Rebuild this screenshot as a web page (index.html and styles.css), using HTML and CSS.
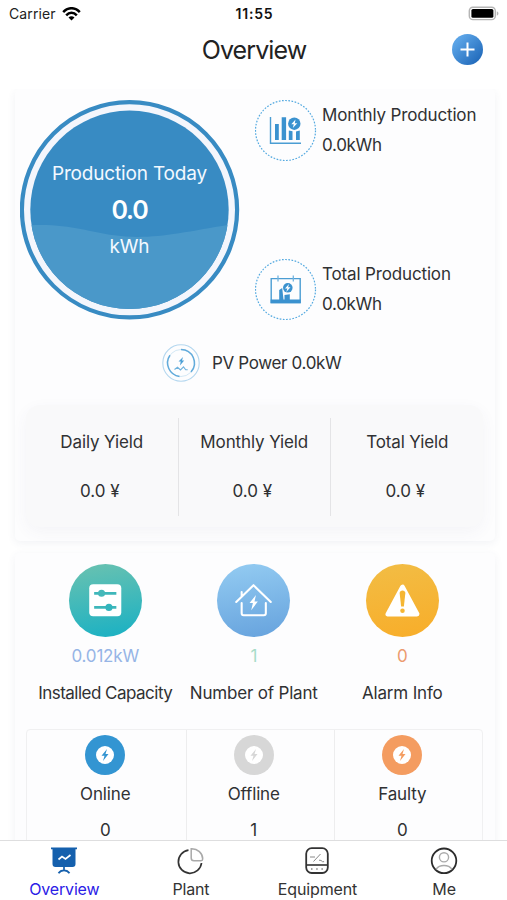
FILE: index.html
```html
<!DOCTYPE html>
<html lang="en">
<head>
<meta charset="utf-8">
<meta name="viewport" content="width=device-width, initial-scale=1">
<title>Overview</title>
<link rel="stylesheet" href="styles.css">
</head>
<body>
<div class="app">
  <header class="status">
    <div class="carrier"><span>Carrier</span>
      <svg width="19" height="14" viewBox="0 0 19 14" fill="none" stroke="#000" stroke-width="2.5"><path d="M1.2 5.1C6-.1 13-.1 17.8 5.1M4.2 8.3c3.1-3.3 7.5-3.3 10.6 0"/><path d="M6.5 10.6c1.7-1.7 4.3-1.7 6 0l-3 3z" fill="#000" stroke="none"/></svg>
    </div>
    <div class="clock">11:55</div>
    <svg class="battery" width="32" height="15" viewBox="0 0 32 15"><rect x="1.3" y="1.2" width="26" height="12.4" rx="3.6" fill="#fff" stroke="#b5b5b5" stroke-width="1.4"/><rect x="3.4" y="3" width="22" height="8.8" rx="1.6" fill="#000"/><path d="M28.8 5.3c2.2.8 2.2 3.6 0 4.400z" fill="#b5b5b5"/></svg>
  </header>
  <div class="titlebar">
    <h1>Overview</h1>
    <button class="add" aria-label="Add"><svg width="31" height="31" viewBox="0 0 31 31"><path d="M15.5 8.5v14M8.5 15.5h14" stroke="#fff" stroke-width="2"/></svg></button>
  </div>

  <main>
    <section class="card summary">
      <div class="hero">
        <div class="gauge">
          <svg class="gauge-art" viewBox="0 0 220 220">
            <defs><clipPath id="disc"><circle cx="109.5" cy="109.8" r="99.2"/></clipPath></defs>
            <circle cx="109.5" cy="109.8" r="107.6" fill="#f4f6fc" stroke="#388bc3" stroke-width="4.2"/>
            <g clip-path="url(#disc)"><path fill="#388bc3" d="M0 0h220v220H0z"/><path fill="#4a98c9" d="M0 126C45 122 68 132 92 135c40 6 70-3 128-12v97H0z"/></g>
          </svg>
          <div class="gauge-text"><span class="g-label">Production Today</span><strong>0.0</strong><span class="g-unit">kWh</span></div>
        </div>
        <div class="metrics">
          <div class="metric">
            <svg width="62" height="62" viewBox="0 0 62 62"><circle cx="30.5" cy="30.5" r="30" fill="none" stroke="#55aae0" stroke-width="1.2" stroke-dasharray="1.7 1.5"/><path d="M15.500 17v26.300h30.500" fill="none" stroke="#4b9dd3" stroke-width="1.400"/><path fill="#3b92cf" d="M20 24h3.800v16H20zM26.700 17.300h4.400V40h-4.400zM33.800 30.500l3.700.8V40h-3.700zM41 31.500l3.800-1V40H41z"/><circle cx="39.300" cy="23.700" r="6.200" fill="#3b92cf"/><path fill="#fff" d="m40.500 19.500-4.200 4.800h2.500l-1 3.700 4.500-4.700h-2.500z"/></svg>
            <div class="metric-text"><span class="m1">Monthly Production</span><span class="val">0.0kWh</span></div>
          </div>
          <div class="metric">
            <svg width="62" height="62" viewBox="0 0 62 62"><circle cx="30.5" cy="30.5" r="30" fill="none" stroke="#55aae0" stroke-width="1.2" stroke-dasharray="1.7 1.5"/><path d="M16.200 19.600h29v24h-29z" fill="none" stroke="#4b9dd3" stroke-width="1.400"/><path d="M23 16.500v6M38.300 16.500v6" stroke="#73b4df" stroke-width="1.300"/><path fill="#3b92cf" d="M15.600 40.500h8.600V31l3-2 1.300 11.500h1V36l5.300-.7v5.200h10.800v3.800h-30z"/><circle cx="32.800" cy="28.800" r="4.800" fill="#3b92cf"/><path fill="#fff" d="m34 25-4 4.400h2.400l-1.200 3.500 4.300-4.700h-2.400z"/></svg>
            <div class="metric-text"><span class="m2">Total Production</span><span class="val">0.0kWh</span></div>
          </div>
        </div>
      </div>
      <div class="pv">
        <svg width="38" height="38" viewBox="0 0 38 38" fill="none"><circle cx="19" cy="19" r="18.200" stroke="#b4d7ef" stroke-width="1.100"/><circle cx="19" cy="19" r="13.500" stroke="#d3e8f5" stroke-width="1"/><path d="M19 5.500A13.500 13.500 0 0 1 29 28M17.500 32.400A13.500 13.500 0 0 1 8 11.300" stroke="#62abdb" stroke-width="1.500"/><path d="m21 13-4.500 4.400h2.200l-.7 4 4.200-5h-2.200z" fill="#4b9fd5"/><path d="m12.500 25.500 3-2.200 3 2.700 3-3.200 2.200 3h2" stroke="#6eb2dd" stroke-width="1.100"/></svg>
        <span>PV Power 0.0kW</span>
      </div>
      <div class="yields">
        <div class="yield"><span>Daily Yield</span><span class="money">0.0 ¥</span></div>
        <div class="yield"><span>Monthly Yield</span><span class="money">0.0 ¥</span></div>
        <div class="yield"><span>Total Yield</span><span class="money">0.0 ¥</span></div>
      </div>
    </section>

    <section class="card plant">
      <div class="stats">
        <div class="stat">
          <div class="badge teal"><svg width="73" height="73" viewBox="0 0 74 74"><rect x="20.5" y="20.5" width="32.5" height="32.5" rx="4" fill="#fff"/><path d="M25.5 29.700h22.500M25.5 44h22.500" stroke="#3eb7ba" stroke-width="2.800"/><circle cx="33" cy="29.700" r="3.600" fill="#45b8b9"/><circle cx="40.500" cy="44" r="3.600" fill="#33b5bd"/></svg></div>
          <span class="num blue">0.012kW</span><span class="cap c1">Installed Capacity</span>
        </div>
        <div class="stat">
          <div class="badge sky"><svg width="73" height="73" viewBox="0 0 74 74" fill="none" stroke="#fff" stroke-width="2.100" stroke-linecap="round" stroke-linejoin="round"><path d="M19.500 38.500 37 21.500l17.500 17M25 33v-4.500M25 39.500V50a2 2 0 0 0 2 2h20.500a2 2 0 0 0 2-2V39.500"/><path d="m39.500 31.500-6.500 8h3.400l-1.700 7.300 6.700-8.800H38z" fill="#fff" stroke="none"/></svg></div>
          <span class="num green">1</span><span class="cap c2">Number of Plant</span>
        </div>
        <div class="stat">
          <div class="badge gold"><svg width="73" height="73" viewBox="0 0 74 74"><path d="M37 23.500 22.300 50.800h29.400z" fill="#fff" stroke="#fff" stroke-width="5" stroke-linejoin="round"/><path d="M34.100 29.500c0-3.600 5.800-3.600 5.800 0L38.400 43h-2.800z" fill="#f5b633"/><circle cx="37" cy="47.400" r="2.300" fill="#f5b633"/></svg></div>
          <span class="num orange">0</span><span class="cap c3">Alarm Info</span>
        </div>
      </div>
      <div class="states">
        <div class="state"><svg class="on" width="40" height="40" viewBox="0 0 40 40"><circle cx="20" cy="20" r="20"/><circle cx="20" cy="20" r="9" fill="#fff"/><path d="m22 14-5.500 6.800h3L18 26l5.500-7h-3z"/></svg><span>Online</span><span class="count">0</span></div>
        <div class="state"><svg class="off" width="40" height="40" viewBox="0 0 40 40"><circle cx="20" cy="20" r="20"/><circle cx="20" cy="20" r="9" fill="#fff"/><path d="m22 14-5.500 6.800h3L18 26l5.500-7h-3z"/></svg><span>Offline</span><span class="count">1</span></div>
        <div class="state"><svg class="fault" width="40" height="40" viewBox="0 0 40 40"><circle cx="20" cy="20" r="20"/><circle cx="20" cy="20" r="9" fill="#fff"/><path d="m22 14-5.500 6.800h3L18 26l5.500-7h-3z"/></svg><span>Faulty</span><span class="count">0</span></div>
      </div>
    </section>
  </main>

  <nav class="tabs">
    <a class="tab active"><svg width="28" height="28" viewBox="0 0 28 28" fill="none"><path d="M1 .5h26v1.800h-1.500V17a3 3 0 0 1-3 3h-17a3 3 0 0 1-3-3V2.300H1z" fill="#1560ad"/><path d="M14 20v3M8.500 26.300C10 23.800 12 23.300 14 23.300s4 .5 5.500 3" stroke="#1560ad" stroke-width="1.700"/><path d="m8.500 12.500 3.500-3 3.500 2.500 5-4" stroke="#fff" stroke-width="1.700"/></svg><span>Overview</span></a>
    <a class="tab"><svg width="28" height="28" viewBox="0 0 28 28" fill="none"><path d="M11.500 3.200A11.600 11.600 0 1 0 24.500 16" stroke="#333" stroke-width="1.700"/><path d="M14.200 1.800c6.500-.3 11.500 4.500 11.500 10.200 0 1-.7 1.700-1.700 1.700h-7c-2 0-2.800-1-2.800-2.800z" stroke="#a9a9a9" stroke-width="1.500"/></svg><span>Plant</span></a>
    <a class="tab"><svg width="28" height="28" viewBox="0 0 28 28" fill="none"><rect x="3.200" y="1.200" width="21.600" height="24.800" rx="5.500" stroke="#333" stroke-width="1.800"/><path d="M3.200 18h21.600" stroke="#333" stroke-width="1.600"/><path d="M7 10h5M17.500 7l-7 7.500M16 13.200l2 .2 1.500 1.300h1.600" stroke="#888"/><path d="M8 22h1.500M13.200 22h1.500M18.400 22h1.500" stroke="#888" stroke-width="1.400"/></svg><span>Equipment</span></a>
    <a class="tab"><svg width="28" height="28" viewBox="0 0 28 28" fill="none"><circle cx="14" cy="13.800" r="12.300" stroke="#2b2b2b" stroke-width="1.800"/><circle cx="14" cy="10.300" r="4.600" stroke="#aaa" stroke-width="1.400"/><path d="M6 22.300c3.500-5 12.500-5 16 0" stroke="#aaa" stroke-width="1.400"/></svg><span>Me</span></a>
  </nav>
</div>
</body>
</html>
```
FILE: styles.css
```css
* { box-sizing: border-box; }
body { margin: 0; background: #fff; color: #303133; font-family: Inter, "Liberation Sans", sans-serif; font-size: 17px; line-height: 20px; white-space: nowrap; }
svg { display: block; flex: none; }
.app { height: 900px; display: flex; flex-direction: column; overflow: hidden; }

.status { display: grid; grid-template-columns: 1fr auto 1fr; align-items: center; height: 27px; padding: 0 7px 0 9px; flex: none; }
.carrier { display: flex; align-items: center; gap: 6px; font-size: 14px; letter-spacing: .1px; color: #222; }
.clock { font-size: 14px; font-weight: 600; letter-spacing: .8px; color: #111; }
.battery { justify-self: end; }

.titlebar { height: 62px; flex: none; display: grid; grid-template-columns: 1fr auto 1fr; padding: 7px 24px 0 25px; align-items: start; }
h1 { grid-column: 2; margin: 0; font-size: 25px; line-height: 32px; font-weight: 400; letter-spacing: -.9px; color: #222; }
.add { justify-self: end; width: 31px; height: 31px; padding: 0; border: 0; border-radius: 50%; background: linear-gradient(135deg, #5aa3e6 20%, #1f68b9 90%); }

main { flex: 1; min-height: 0; overflow: hidden; padding: 0 12px 0 15px; display: flex; flex-direction: column; gap: 12px; }
.card { flex: none; background: #fdfdfe; border-radius: 5px; box-shadow: 0 2px 8px rgba(60, 65, 110, .07); }
.summary { height: 452px; padding: 11px 13px 0 5px; }
.hero { display: flex; gap: 15px; }
.gauge { width: 220px; height: 220px; display: grid; }
.gauge-art, .gauge-text { grid-area: 1 / 1; }
.gauge-text { display: flex; flex-direction: column; align-items: center; color: #f3f9ff; padding: 64px 1px 0 0; font-size: 19px; letter-spacing: -.17px; z-index: 1; }
.gauge-text strong { font-size: 25px; font-weight: 600; line-height: 30px; margin: 11px 0 12px; letter-spacing: -1.200px; color: #fff; }
.metrics { display: flex; flex-direction: column; gap: 97px; }
.metric { display: flex; gap: 5px; }
.metric-text { display: flex; flex-direction: column; gap: 10px; padding-top: 5px; letter-spacing: -.15px; }
.val { letter-spacing: -.3px; }
.pv { display: flex; align-items: center; gap: 11px; margin: 23px 0 0 142px; height: 38px; letter-spacing: -.35px; }
.pv span { padding-left: 1px; }
.yields { width: 457px; height: 122px; margin: 23px 0 0 6px; border-radius: 14px; background: #f9f9fa; box-shadow: 0 5px 16px rgba(70, 75, 120, .05); display: grid; grid-template-columns: repeat(3, 152.5px); padding-top: 13px; letter-spacing: -.12px; }
.yield { height: 98px; display: flex; flex-direction: column; align-items: center; padding-top: 14px; gap: 29px; border-right: 1px solid #e4e4e6; }
.yield:last-child { border: 0; }
.money { padding-right: 4px; letter-spacing: 0; }

.plant { height: 400px; padding: 11px 14px 0 11px; }
.stats { display: grid; grid-template-columns: repeat(3, 148.5px); padding-left: 5px; }
.stat { display: flex; flex-direction: column; align-items: center; }
.badge { width: 73px; height: 73px; margin-bottom: 1px; border-radius: 50%; }
.teal { background: linear-gradient(170deg, #6bc2b0, #20b2c2 90%); }
.sky { background: linear-gradient(170deg, #94ccf2, #68a4de 95%); }
.gold { background: linear-gradient(170deg, #f2bd45, #f8ad29); }
.num { margin: 8px 0 17px; letter-spacing: -.2px; }
.blue { color: #96b5e6; }
.green { color: #a7dcc8; }
.orange { color: #ec9b70; }
.c1 { letter-spacing: -.52px; }
.c2, .c3 { letter-spacing: -.18px; }
.states { width: 457px; height: 200px; margin-top: 26px; border: 1px solid #f0f0f1; border-radius: 4px; display: grid; grid-template-columns: repeat(3, 148.5px); padding-left: 4px; letter-spacing: -.15px; }
.state { display: flex; flex-direction: column; align-items: center; padding-top: 5px; position: relative; }
.state:not(:last-child)::after { content: ""; position: absolute; top: 0; bottom: 0; right: -7px; width: 1px; background: #ededee; }
.state svg { margin-bottom: 9px; }
.count { margin-top: 16px; }
.on { fill: #3395d2; }
.off { fill: #d7d7d7; }
.fault { fill: #f49c60; }

.tabs { height: 60px; flex: none; display: grid; grid-template-columns: repeat(4, 126.6px); background: #fff; border-top: 1px solid #dededf; padding-top: 6px; padding-left: 1px; }
.tab { display: flex; flex-direction: column; align-items: center; gap: 5px; font-size: 16px; line-height: 19px; letter-spacing: -.15px; color: #333; }
.active { color: #2b20e6; }
```
